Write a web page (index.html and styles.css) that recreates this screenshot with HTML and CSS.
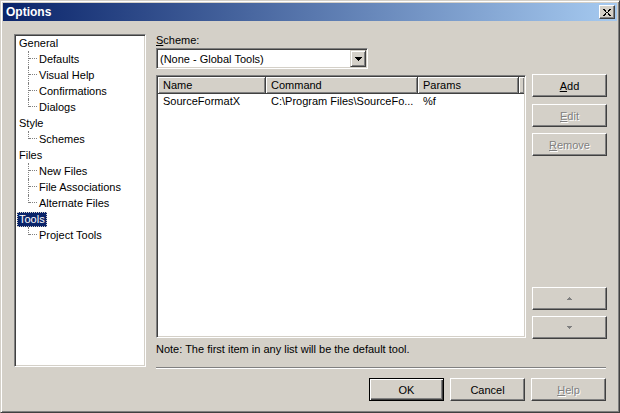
FILE: index.html
```html
<!DOCTYPE html>
<html lang="en">
<head>
  <meta charset="UTF-8" />
  <title>Options</title>
  <link rel="stylesheet" href="styles.css">
</head>
<body>
  <div class="window">
    <div class="titlebar">
      <span class="title">Options</span>
      <button class="close-btn">
        <svg width="8" height="7" viewBox="0 0 8 7"><path d="M0 0h2v1H0zM1 1h2v1H1zM2 2h1v1H2zM3 3h2v1H3zM2 4h1v1H2zM1 5h2v1H1zM0 6h2v1H0zM6 0h2v1H6zM5 1h2v1H5zM5 2h1v1H5zM5 4h1v1H5zM5 5h2v1H5zM6 6h2v1H6z" fill="#000"/></svg>
      </button>
    </div>

    <div class="dialog">
      <div class="tree">
        <div class="node"><span>General</span></div>
        <div class="leaf">Defaults</div>
        <div class="leaf">Visual Help</div>
        <div class="leaf">Confirmations</div>
        <div class="leaf last">Dialogs</div>
        <div class="node"><span>Style</span></div>
        <div class="leaf last">Schemes</div>
        <div class="node"><span>Files</span></div>
        <div class="leaf">New Files</div>
        <div class="leaf">File Associations</div>
        <div class="leaf last">Alternate Files</div>
        <div class="node"><span class="selected">Tools</span></div>
        <div class="leaf last">Project Tools</div>
      </div>

      <div class="panel">
        <div class="field-label"><u>S</u>cheme:</div>
        <div class="combo">
          <span class="combo-text">(None - Global Tools)</span>
          <span class="combo-drop">
            <svg width="7" height="4" viewBox="0 0 7 4"><path d="M0 0h7v1H0zM1 1h5v1H1zM2 2h3v1H2zM3 3h1v1H3z" fill="#000"/></svg>
          </span>
        </div>

        <div class="tools-row">
          <div class="listview">
            <div class="lv-header">
              <div class="lv-col col-name">Name</div>
              <div class="lv-col col-cmd">Command</div>
              <div class="lv-col col-params">Params</div>
              <div class="lv-col col-fill"></div>
            </div>
            <div class="lv-row">
              <div class="lv-cell col-name">SourceFormatX</div>
              <div class="lv-cell col-cmd">C:\Program Files\SourceFo...</div>
              <div class="lv-cell col-params">%f</div>
            </div>
          </div>

          <div class="side-buttons">
            <button class="btn"><u>A</u>dd</button>
            <button class="btn disabled btn-edit"><u>E</u>dit</button>
            <button class="btn disabled btn-remove"><u>R</u>emove</button>
            <button class="btn btn-up">
              <svg width="5" height="3" viewBox="0 0 5 3"><path d="M2 0h1v1H2zM1 1h3v1H1zM0 2h5v1H0z" fill="#808080"/></svg>
            </button>
            <button class="btn btn-down">
              <svg width="5" height="3" viewBox="0 0 5 3"><path d="M0 0h5v1H0zM1 1h3v1H1zM2 2h1v1H2z" fill="#808080"/></svg>
            </button>
          </div>
        </div>

        <div class="note">Note: The first item in any list will be the default tool.</div>
        <div class="separator"></div>

        <div class="dialog-buttons">
          <button class="btn default">OK</button>
          <button class="btn">Cancel</button>
          <button class="btn disabled"><u>H</u>elp</button>
        </div>
      </div>
    </div>
  </div>
</body>
</html>
```

FILE: styles.css
```css
body {
  margin: 0;
  padding: 0;
  background: #d4d0c8;
  font-family: 'Liberation Sans', Arial, sans-serif;
  font-size: 11px;
  color: #000;
}

.window {
  width: 620px;
  height: 413px;
  box-sizing: border-box;
  background: #d4d0c8;
  border: 1px solid;
  border-color: #d4d0c8 #404040 #404040 #d4d0c8;
  box-shadow: inset 1px 1px #fff, inset -1px -1px #808080;
  padding: 2px;
  display: flex;
  flex-direction: column;
}

/* title bar */
.titlebar {
  height: 18px;
  background: linear-gradient(90deg, #0a246a, #a6caf0);
  display: flex;
  align-items: center;
  justify-content: space-between;
  padding: 0 2px 0 3px;
}

.title {
  color: #fff;
  font-weight: bold;
  font-size: 12px;
}

.close-btn {
  width: 16px;
  height: 14px;
  padding: 0;
  margin: 0;
  background: #d4d0c8;
  border: 1px solid;
  border-color: #fff #404040 #404040 #fff;
  box-shadow: inset -1px -1px #808080;
  display: flex;
  align-items: center;
  justify-content: center;
}

.close-btn svg {
  display: block;
}

/* dialog body */
.dialog {
  flex: 1;
  display: flex;
  gap: 10px;
  padding: 13px 11px 9px 11px;
}

.tree {
  flex-shrink: 0;
  width: 132px;
  height: 333px;
  box-sizing: border-box;
  background: #fff;
  border: 1px solid;
  border-color: #808080 #fff #fff #808080;
  box-shadow: inset 1px 1px #404040, inset -1px -1px #d4d0c8;
  padding: 0 1px 1px 1px;
}

.node,
.leaf {
  height: 16px;
  line-height: 16px;
  white-space: nowrap;
}

.node span {
  display: inline-block;
  line-height: 15px;
  padding: 0 2px;
  margin-left: 1px;
}

.node .selected {
  background: #0a246a;
  color: #fff;
  outline: 1px dotted #d4d0c8;
  outline-offset: -1px;
}

.leaf {
  position: relative;
  padding-left: 23px;
}

.leaf::before {
  content: "";
  position: absolute;
  left: 12px;
  top: 0;
  height: 16px;
  border-left: 1px dotted #808080;
}

.leaf.last::before {
  height: 8px;
}

.leaf::after {
  content: "";
  position: absolute;
  left: 13px;
  top: 7px;
  width: 8px;
  border-top: 1px dotted #808080;
}

/* right panel */
.panel {
  flex: 1;
  min-width: 0;
  display: flex;
  flex-direction: column;
}

.field-label {
  height: 14px;
  line-height: 13px;
}

.combo {
  height: 21px;
  width: 212px;
  box-sizing: border-box;
  background: #fff;
  border: 1px solid;
  border-color: #808080 #fff #fff #808080;
  box-shadow: inset 1px 1px #404040, inset -1px -1px #d4d0c8;
  padding: 1px;
  display: flex;
  align-items: center;
}

.combo-text {
  flex: 1;
  padding-left: 2px;
}

.combo-drop {
  width: 16px;
  height: 17px;
  box-sizing: border-box;
  background: #d4d0c8;
  border: 1px solid;
  border-color: #d4d0c8 #404040 #404040 #d4d0c8;
  box-shadow: inset 1px 1px #fff, inset -1px -1px #808080;
  display: flex;
  align-items: center;
  justify-content: center;
}

.combo-drop svg {
  display: block;
}

.tools-row {
  margin-top: 6px;
  height: 264px;
  display: flex;
  gap: 6px;
}

.listview {
  flex: 1;
  height: 263px;
  box-sizing: border-box;
  background: #fff;
  border: 1px solid;
  border-color: #808080 #fff #fff #808080;
  box-shadow: inset 1px 1px #404040, inset -1px -1px #d4d0c8;
  padding: 1px;
}

.lv-header {
  display: flex;
  height: 17px;
}

.lv-col {
  flex-shrink: 0;
  box-sizing: border-box;
  height: 17px;
  line-height: 16px;
  background: #d4d0c8;
  border-right: 1px solid #404040;
  border-bottom: 1px solid #404040;
  box-shadow: inset 1px 1px #fff, inset -1px -1px #808080;
  padding-left: 5px;
}

.col-name {
  width: 108px;
}

.col-cmd {
  width: 152px;
}

.col-params {
  width: 101px;
}

.col-fill {
  flex: 1 1 auto;
  border-right: none;
}

.lv-row {
  display: flex;
  height: 15px;
  line-height: 15px;
}

.lv-cell {
  flex-shrink: 0;
  box-sizing: border-box;
  padding-left: 5px;
  white-space: nowrap;
  overflow: hidden;
}

/* buttons */
.btn {
  box-sizing: border-box;
  width: 75px;
  height: 23px;
  margin: 0;
  padding: 0;
  font-family: inherit;
  font-size: 11px;
  color: #000;
  background: #d4d0c8;
  border: 1px solid;
  border-color: #fff #404040 #404040 #fff;
  box-shadow: inset -1px -1px #808080;
}

.btn.disabled {
  color: #808080;
  text-shadow: 1px 1px #fff;
}

.btn.default {
  border: 1px solid #000;
  box-shadow: inset 1px 1px #fff, inset -1px -1px #404040, inset -2px -2px #808080;
}

.btn svg {
  display: block;
  margin: 0 auto;
}

.side-buttons {
  flex-shrink: 0;
  width: 75px;
  margin-top: -1px;
  height: 265px;
  display: flex;
  flex-direction: column;
}

.btn-edit {
  margin-top: 7px;
}

.btn-remove {
  margin-top: 6px;
}

.btn-up {
  margin-top: auto;
}

.btn-down {
  margin-top: 6px;
}

.note {
  margin-top: 3px;
  height: 14px;
  line-height: 14px;
}

.separator {
  margin-top: 11px;
  height: 0;
  border-top: 1px solid #808080;
  border-bottom: 1px solid #fff;
}

.dialog-buttons {
  margin-top: 9px;
  display: flex;
  justify-content: flex-end;
  gap: 6px;
}
```
